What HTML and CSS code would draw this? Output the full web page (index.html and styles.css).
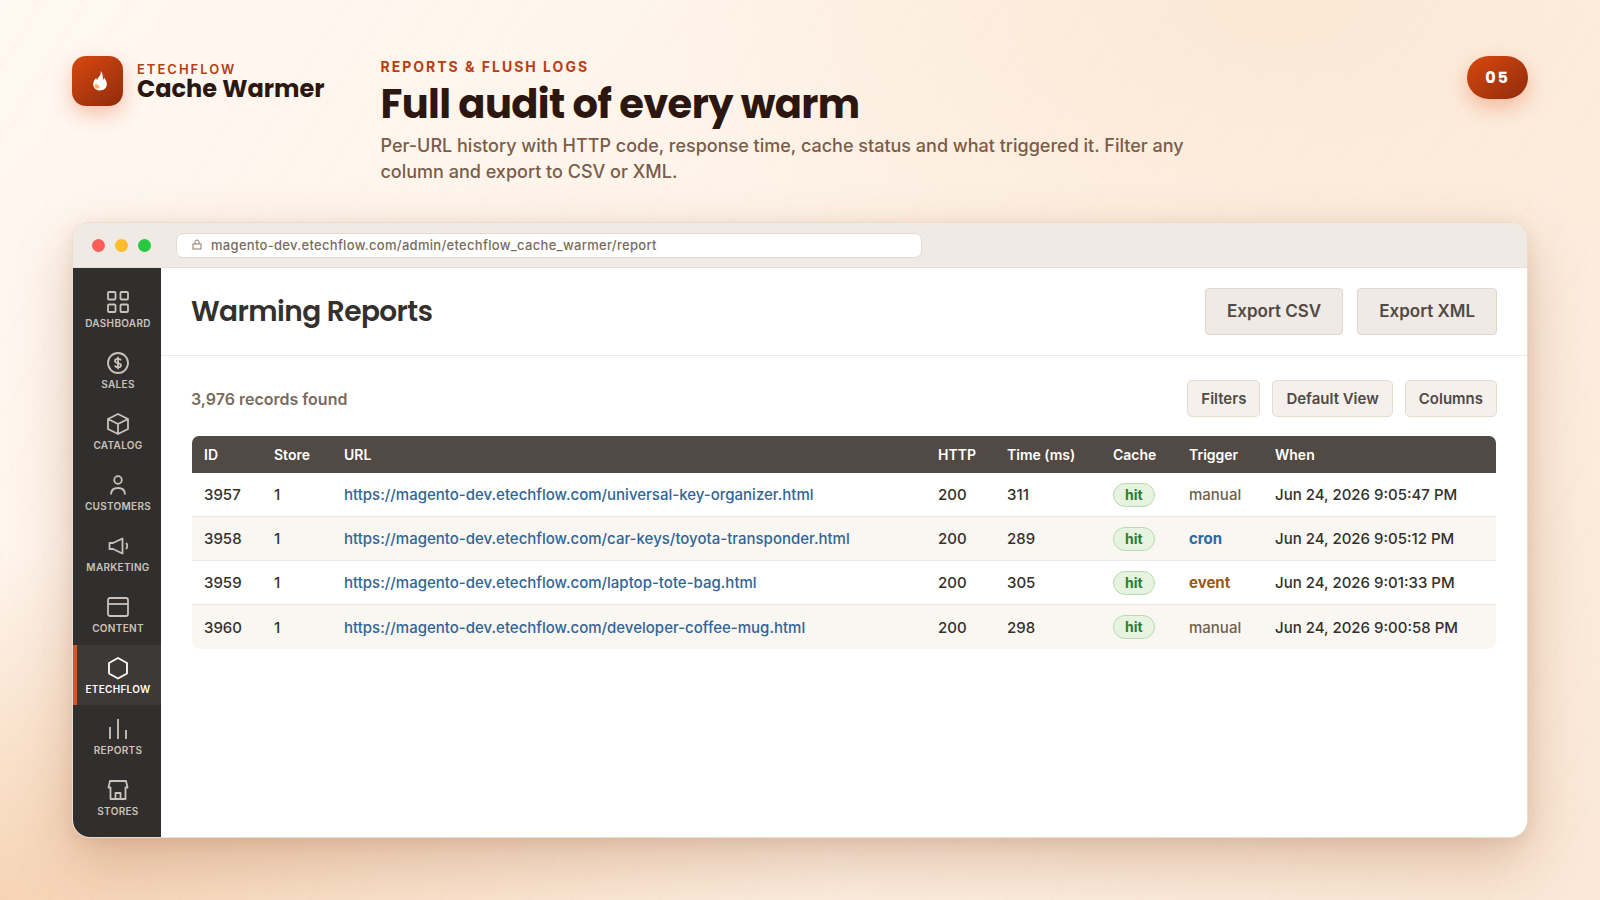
FILE: index.html
```html
<!DOCTYPE html>
<html lang="en">
<head>
    <meta charset="UTF-8">
    <meta name="viewport" content="width=device-width, initial-scale=1.0">
    <title>Cache Warmer - Warming Reports</title>
    <link rel="stylesheet" href="styles.css">
</head>
<body>
    <div class="slide">
        <header class="top">
            <div class="brand">
                <div class="brand-mark">
                    <svg width="16" height="20" viewBox="0 0 16 20">
                        <path fill="#fff" d="M8.6 0c.7 3-.6 4.6-2 6.300C5.900 7.200 5.400 8 5.300 9 4.600 8.600 4.200 7.900 4.100 7 2.200 8.900 1.200 10.900 1.200 13.200 1.200 17 4.200 19.500 8 19.500s6.800-2.500 6.800-6.400c0-2.600-1.200-4.800-2.700-6.600-.1 1.100-.5 1.900-1.300 2.400C11.200 5.400 10.800 2 8.600 0z"/>
                        <path fill="#f6b26b" d="M4.300 12.200c-1.400 1.200-2 2.300-1.700 3.600.3 1.300 1.400 2 2.600 2 1.300 0 2.300-.8 2.300-2 0-1.100-.7-1.700-1.300-2.200-.3.500-.6.700-1 .8-.1-.8-.3-1.500-.9-2.200z"/>
                    </svg>
                </div>
                <div class="brand-text">
                    <span class="brand-company">ETECHFLOW</span>
                    <span class="brand-name">Cache Warmer</span>
                </div>
            </div>
            <div class="intro">
                <p class="eyebrow">REPORTS &amp; FLUSH LOGS</p>
                <h1>Full audit of every warm</h1>
                <p class="lead">Per-URL history with HTTP code, response time, cache status and what triggered it. Filter any column and export to CSV or XML.</p>
            </div>
            <div class="page-number">05</div>
        </header>

        <div class="window">
            <div class="window-bar">
                <div class="dots">
                    <span class="dot red"></span>
                    <span class="dot yellow"></span>
                    <span class="dot green"></span>
                </div>
                <div class="address">
                    <svg class="lock" width="10" height="12" viewBox="0 0 10 12"><rect x="1" y="5" width="8" height="5"/><path d="M3 5V3a2 2 0 0 1 4 0v2"/></svg>
                    <input type="text" aria-label="Address" value="magento-dev.etechflow.com/admin/etechflow_cache_warmer/report" readonly>
                </div>
            </div>

            <div class="window-body">
                <nav class="sidebar">
                    <a href="#" class="nav-item">
                        <svg viewBox="0 0 24 24"><rect x="2" y="2" width="7.500" height="7.500" rx="1"/><rect x="14.500" y="2" width="7.500" height="7.500" rx="1"/><rect x="2" y="14.500" width="7.500" height="7.500" rx="1"/><rect x="14.500" y="14.500" width="7.500" height="7.500" rx="1"/></svg>
                        <span>DASHBOARD</span>
                    </a>
                    <a href="#" class="nav-item">
                        <svg viewBox="0 0 24 24"><circle cx="12" cy="12" r="10"/><path d="M12 5.800v12.400M15 9.300C14.600 8.300 13.500 7.800 12 7.800c-1.800 0-3 .8-3 2.100 0 3 6 1.300 6 4.300 0 1.300-1.200 2.100-3 2.100-1.600 0-2.800-.6-3.100-1.700"/></svg>
                        <span>SALES</span>
                    </a>
                    <a href="#" class="nav-item">
                        <svg viewBox="0 0 24 24"><path d="M12 2l10 5v10l-10 5-10-5V7zM2 7l10 5 10-5M12 12v10"/></svg>
                        <span>CATALOG</span>
                    </a>
                    <a href="#" class="nav-item">
                        <svg viewBox="0 0 24 24"><circle cx="12" cy="7" r="3.800"/><path d="M5 21.500c0-4.500 2.800-6.500 7-6.500s7 2 7 6.500"/></svg>
                        <span>CUSTOMERS</span>
                    </a>
                    <a href="#" class="nav-item">
                        <svg viewBox="0 0 24 24"><path d="M3.500 9v6H7l9.500 4.500v-15L7 9zM20 9c1.700 1.500 1.700 4.500 0 6"/></svg>
                        <span>MARKETING</span>
                    </a>
                    <a href="#" class="nav-item">
                        <svg viewBox="0 0 24 24"><rect x="2" y="3" width="20" height="18" rx="2"/><path d="M2 9h20"/></svg>
                        <span>CONTENT</span>
                    </a>
                    <a href="#" class="nav-item active">
                        <svg viewBox="0 0 24 24"><path d="M12 2l9 5v10.500l-9 5-9-5V7z"/></svg>
                        <span>ETECHFLOW</span>
                    </a>
                    <a href="#" class="nav-item">
                        <svg viewBox="0 0 24 24"><path d="M4 22V10M12 22V2M20 22v-9"/></svg>
                        <span>REPORTS</span>
                    </a>
                    <a href="#" class="nav-item">
                        <svg viewBox="0 0 24 24"><path d="M4 3h16l1.500 6.500h-2V21h-15V9.500h-2zM9.500 21v-6h5v6"/></svg>
                        <span>STORES</span>
                    </a>
                </nav>

                <main class="main">
                    <div class="page-head">
                        <h2>Warming Reports</h2>
                        <div class="actions">
                            <button type="button" class="btn">Export CSV</button>
                            <button type="button" class="btn">Export XML</button>
                        </div>
                    </div>
                    <div class="content">
                        <div class="toolbar">
                            <span class="records">3,976 records found</span>
                            <div class="tools">
                                <button type="button" class="btn-small">Filters</button>
                                <button type="button" class="btn-small">Default View</button>
                                <button type="button" class="btn-small">Columns</button>
                            </div>
                        </div>
                        <div class="grid-wrap">
                            <table>
                                <colgroup>
                                    <col class="col-id">
                                    <col class="col-id">
                                    <col>
                                    <col class="col-http">
                                    <col class="col-time">
                                    <col class="col-cache">
                                    <col class="col-trigger">
                                    <col class="col-when">
                                </colgroup>
                                <thead>
                                    <tr>
                                        <th>ID</th>
                                        <th>Store</th>
                                        <th>URL</th>
                                        <th>HTTP</th>
                                        <th>Time (ms)</th>
                                        <th>Cache</th>
                                        <th>Trigger</th>
                                        <th>When</th>
                                    </tr>
                                </thead>
                                <tbody>
                                    <tr>
                                        <td>3957</td>
                                        <td>1</td>
                                        <td><a href="#">https://magento-dev.etechflow.com/universal-key-organizer.html</a></td>
                                        <td>200</td>
                                        <td>311</td>
                                        <td><span class="pill">hit</span></td>
                                        <td><span class="manual">manual</span></td>
                                        <td>Jun 24, 2026 9:05:47 PM</td>
                                    </tr>
                                    <tr>
                                        <td>3958</td>
                                        <td>1</td>
                                        <td><a href="#">https://magento-dev.etechflow.com/car-keys/toyota-transponder.html</a></td>
                                        <td>200</td>
                                        <td>289</td>
                                        <td><span class="pill">hit</span></td>
                                        <td><span class="cron">cron</span></td>
                                        <td>Jun 24, 2026 9:05:12 PM</td>
                                    </tr>
                                    <tr>
                                        <td>3959</td>
                                        <td>1</td>
                                        <td><a href="#">https://magento-dev.etechflow.com/laptop-tote-bag.html</a></td>
                                        <td>200</td>
                                        <td>305</td>
                                        <td><span class="pill">hit</span></td>
                                        <td><span class="event">event</span></td>
                                        <td>Jun 24, 2026 9:01:33 PM</td>
                                    </tr>
                                    <tr>
                                        <td>3960</td>
                                        <td>1</td>
                                        <td><a href="#">https://magento-dev.etechflow.com/developer-coffee-mug.html</a></td>
                                        <td>200</td>
                                        <td>298</td>
                                        <td><span class="pill">hit</span></td>
                                        <td><span class="manual">manual</span></td>
                                        <td>Jun 24, 2026 9:00:58 PM</td>
                                    </tr>
                                </tbody>
                            </table>
                        </div>
                    </div>
                </main>
            </div>
        </div>
    </div>
</body>
</html>
```
FILE: styles.css
```css
* {
    box-sizing: border-box;
}
body {
    margin: 0;
    font-family: Inter, "Liberation Sans", sans-serif;
    font-weight: 500;
    color: #33302d;
}
h1, h2, p {
    margin: 0;
}
.slide {
    min-height: 100vh;
    padding: 56px 72px 62px;
    display: flex;
    flex-direction: column;
    gap: 37px;
    background:
        repeating-linear-gradient(122deg, transparent 0 36px, rgba(150, 80, 30, 0.025) 36px 37px),
        radial-gradient(900px 500px at 80% 0%, #fbe8d5, transparent 70%),
        radial-gradient(1200px 500px at 0% 100%, #f6d4b5, transparent 70%),
        linear-gradient(135deg, #fff8f2 0%, #fef2e6 50%, #fbe8d6 100%);
}

/* header */
.top {
    display: flex;
    align-items: flex-start;
}
.brand {
    display: flex;
    align-items: center;
    gap: 14px;
    margin-right: 56px;
}
.brand-mark {
    display: flex;
    align-items: center;
    justify-content: center;
    width: 51px;
    height: 50px;
    padding-left: 4px;
    border-radius: 14px;
    background: linear-gradient(145deg, #d9480f, #8f2c0c);
    box-shadow: 0 8px 20px rgba(217, 72, 15, 0.3);
}
.brand-text {
    display: flex;
    flex-direction: column;
}
.brand-company {
    font-size: 13px;
    line-height: 15px;
    font-weight: 600;
    letter-spacing: 2px;
    color: #b93d12;
}
.brand-name {
    font-family: Poppins, Inter, sans-serif;
    font-size: 24px;
    line-height: 24px;
    font-weight: 700;
    color: #2b1710;
}
.intro {
    flex: 1;
}
.eyebrow {
    font-size: 14px;
    line-height: 22px;
    font-weight: 700;
    letter-spacing: 2px;
    color: #b93d12;
}
h1 {
    font-family: Poppins, Inter, sans-serif;
    font-size: 40px;
    line-height: 52px;
    font-weight: 700;
    letter-spacing: -0.015em;
    color: #2b1710;
}
.lead {
    max-width: 820px;
    margin-top: 3px;
    font-size: 18px;
    line-height: 26px;
    color: #7a5c49;
}
.page-number {
    padding: 10px 18px;
    border-radius: 22px;
    font-family: Poppins, Inter, sans-serif;
    font-size: 16px;
    line-height: 23px;
    font-weight: 700;
    letter-spacing: 2px;
    color: #fff;
    background: linear-gradient(145deg, #d9480f, #8f2c0c);
    box-shadow: 0 8px 20px rgba(217, 72, 15, 0.3);
}

/* browser window */
.window {
    flex: 1;
    display: flex;
    flex-direction: column;
    overflow: hidden;
    border: 1px solid #ecdccb;
    border-radius: 18px;
    background: #fff;
    box-shadow: 0 24px 60px rgba(140, 60, 20, 0.26), 0 4px 16px rgba(140, 60, 20, 0.1);
}
.window-bar {
    display: flex;
    align-items: center;
    gap: 25px;
    height: 45px;
    padding: 0 19px;
    border-bottom: 1px solid #e6dfd5;
    background: #efeae4;
}
.dots {
    display: flex;
    gap: 10px;
}
.dot {
    width: 13px;
    height: 13px;
    border-radius: 50%;
}
.red {
    background: #ff5f57;
}
.yellow {
    background: #febc2e;
}
.green {
    background: #28c840;
}
.address {
    display: flex;
    align-items: center;
    gap: 9px;
    width: 53%;
    max-width: 746px;
    height: 25px;
    padding: 0 15px;
    border: 1px solid #e3dad0;
    border-radius: 7px;
    background: #fff;
}
.lock {
    fill: none;
    stroke: #8a7a6b;
}
.address input {
    flex: 1;
    padding: 0;
    border: 0;
    outline: 0;
    background: none;
    font: 500 13px Inter, sans-serif;
    letter-spacing: 0.3px;
    color: #7a6b5d;
}
.window-body {
    flex: 1;
    display: flex;
}

/* admin menu */
.sidebar {
    display: flex;
    flex-direction: column;
    gap: 1px;
    width: 88px;
    padding-top: 11px;
    background: #312f2d;
}
.nav-item {
    display: flex;
    flex-direction: column;
    align-items: center;
    gap: 2px;
    height: 60px;
    padding: 11px 0 0 2px;
    font-size: 10px;
    line-height: 14px;
    font-weight: 600;
    letter-spacing: 0.3px;
    text-decoration: none;
    color: #cbc3ba;
}
.nav-item svg {
    width: 24px;
    height: 24px;
    fill: none;
    stroke: currentColor;
    stroke-width: 1.8;
    stroke-linejoin: round;
}
.nav-item.active {
    color: #fff;
    background: #3d3936;
    box-shadow: inset 4px 0 #d9541e;
}

/* report */
.main {
    flex: 1;
}
.page-head {
    display: flex;
    align-items: center;
    justify-content: space-between;
    padding: 20px 30px;
    border-bottom: 1px solid #efeae3;
}
h2 {
    font-family: Poppins, Inter, sans-serif;
    font-size: 28px;
    line-height: 40px;
    font-weight: 600;
    letter-spacing: -0.02em;
    color: #33302d;
}
.actions {
    display: flex;
    gap: 14px;
}
.btn {
    padding: 0 21px;
    border: 1px solid #e0d6cc;
    border-radius: 4px;
    font: 600 17px/45px Inter, sans-serif;
    color: #514943;
    background: #efeae5;
}
.content {
    padding: 24px 30px;
}
.toolbar {
    display: flex;
    align-items: center;
    justify-content: space-between;
    margin-bottom: 18px;
}
.records {
    font-size: 16px;
    font-weight: 600;
    color: #7a6b5d;
}
.tools {
    display: flex;
    gap: 12px;
}
.btn-small {
    padding: 0 13px;
    border: 1px solid #e6dbd1;
    border-radius: 5px;
    font: 600 15px/35px Inter, sans-serif;
    color: #514943;
    background: #f5f0eb;
}
.grid-wrap {
    overflow: hidden;
    border: 1px solid #fff;
    border-radius: 8px;
}
table {
    width: 100%;
    border-spacing: 0;
    table-layout: fixed;
    font-size: 15px;
}
.col-id {
    width: 70px;
}
.col-http {
    width: 69px;
}
.col-time {
    width: 106px;
}
.col-cache {
    width: 76px;
}
.col-trigger {
    width: 86px;
}
.col-when {
    width: 233px;
}
th, td {
    padding: 0 12px;
    text-align: left;
    white-space: nowrap;
}
th {
    height: 37px;
    font-size: 14px;
    font-weight: 600;
    color: #fff;
    background: #514943;
}
td {
    height: 44px;
    border-bottom: 1px solid #efe8e1;
}
tbody tr:last-child td {
    border-bottom: 0;
}
tbody tr:nth-child(even) {
    background: #faf7f3;
}
td a {
    color: #2f6598;
    text-decoration: none;
}
.pill {
    display: inline-block;
    padding: 0 11px;
    border: 1px solid #b9dbb0;
    border-radius: 12px;
    font-size: 14px;
    line-height: 22px;
    font-weight: 700;
    color: #2e7d32;
    background: #e5f3df;
}
.manual {
    color: #6f5f50;
}
.cron {
    font-weight: 700;
    color: #2a66a5;
}
.event {
    font-weight: 700;
    color: #9a5a14;
}
```
